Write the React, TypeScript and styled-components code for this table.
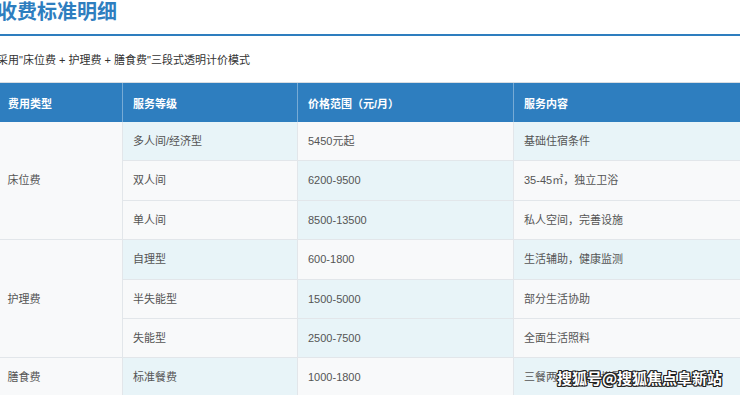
import React from 'react';
import styled, { createGlobalStyle } from 'styled-components';

const GlobalStyle = createGlobalStyle`
  html, body {
    margin: 0;
    padding: 0;
    background: #fff;
    overflow: hidden;
  }
  body {
    font-family: 'Liberation Sans', 'Noto Sans CJK SC', sans-serif;
    color: #555;
  }
`;

const blue = '#2e7ebf';

const Page = styled.div({
  position: 'relative',
  width: '743px',
  height: '395px',
  marginLeft: '-3px',
  overflow: 'hidden',
});

const Title = styled.h2({
  margin: 0,
  fontSize: '20px',
  lineHeight: '24px',
  fontWeight: 'bold',
  color: blue,
  paddingBottom: '10px',
  borderBottom: `2px solid ${blue}`,
});

const Intro = styled.p({
  margin: '15px 0 13px',
  fontSize: '11px',
  lineHeight: '18px',
  color: '#333',
});

const Table = styled.table({
  width: '780px',
  borderCollapse: 'collapse',
  tableLayout: 'fixed',
  fontSize: '11px',
});

const HeadCell = styled.th({
  background: blue,
  color: '#fff',
  fontWeight: 'bold',
  textAlign: 'left',
  padding: '0 10px',
  height: '39px',
  borderLeft: '1px solid rgba(255,255,255,0.35)',
  borderTop: '1px solid #d8dde2',
  ':first-child': {
    borderLeft: 'none',
  },
});

const Row = styled.tr({
  background: '#f8f9fa',
  ':nth-child(even)': {
    background: '#e8f4f8',
  },
});

const Cell = styled.td({
  padding: '10px 10px',
  lineHeight: '18.4px',
  color: '#555',
  borderLeft: '1px solid #e2e6ea',
  borderBottom: '1px solid #e2e6ea',
  verticalAlign: 'middle',
  whiteSpace: 'nowrap',
});

const TypeCell = styled(Cell)({
  borderLeft: 'none',
});

const Watermark = styled.div({
  position: 'absolute',
  right: '18px',
  bottom: '7px',
  fontFamily: "'Noto Sans CJK SC', sans-serif",
  fontSize: '15px',
  fontWeight: 'bold',
  lineHeight: '20px',
  color: '#fff',
  textShadow:
    '1px 1px 0 #222, -1px -1px 0 #222, 1px -1px 0 #222, -1px 1px 0 #222, 0 1px 0 #222, 0 -1px 0 #222, 1px 0 0 #222, -1px 0 0 #222',
});

type Fee = {
  type?: string;
  span?: number;
  level: string;
  price: string;
  content: string;
};

const rows: Fee[] = [
  { type: '床位费', span: 3, level: '多人间/经济型', price: '5450元起', content: '基础住宿条件' },
  { level: '双人间', price: '6200-9500', content: '35-45㎡，独立卫浴' },
  { level: '单人间', price: '8500-13500', content: '私人空间，完善设施' },
  { type: '护理费', span: 3, level: '自理型', price: '600-1800', content: '生活辅助，健康监测' },
  { level: '半失能型', price: '1500-5000', content: '部分生活协助' },
  { level: '失能型', price: '2500-7500', content: '全面生活照料' },
  { type: '膳食费', span: 1, level: '标准餐费', price: '1000-1800', content: '三餐两点，营养搭配' },
];

export default function App() {
  return (
    <>
      <GlobalStyle />
      <Page>
        <Title>收费标准明细</Title>
        <Intro>采用"床位费 + 护理费 + 膳食费"三段式透明计价模式</Intro>
        <Table>
          <colgroup>
            <col style={{ width: '125px' }} />
            <col style={{ width: '175px' }} />
            <col style={{ width: '216px' }} />
            <col />
          </colgroup>
          <thead>
            <tr>
              <HeadCell>费用类型</HeadCell>
              <HeadCell>服务等级</HeadCell>
              <HeadCell>价格范围（元/月）</HeadCell>
              <HeadCell>服务内容</HeadCell>
            </tr>
          </thead>
          <tbody>
            {rows.map(r => (
              <Row key={r.level}>
                {r.type && <TypeCell rowSpan={r.span}>{r.type}</TypeCell>}
                <Cell>{r.level}</Cell>
                <Cell>{r.price}</Cell>
                <Cell>{r.content}</Cell>
              </Row>
            ))}
          </tbody>
        </Table>
        <Watermark>搜狐号@搜狐焦点阜新站</Watermark>
      </Page>
    </>
  );
}
